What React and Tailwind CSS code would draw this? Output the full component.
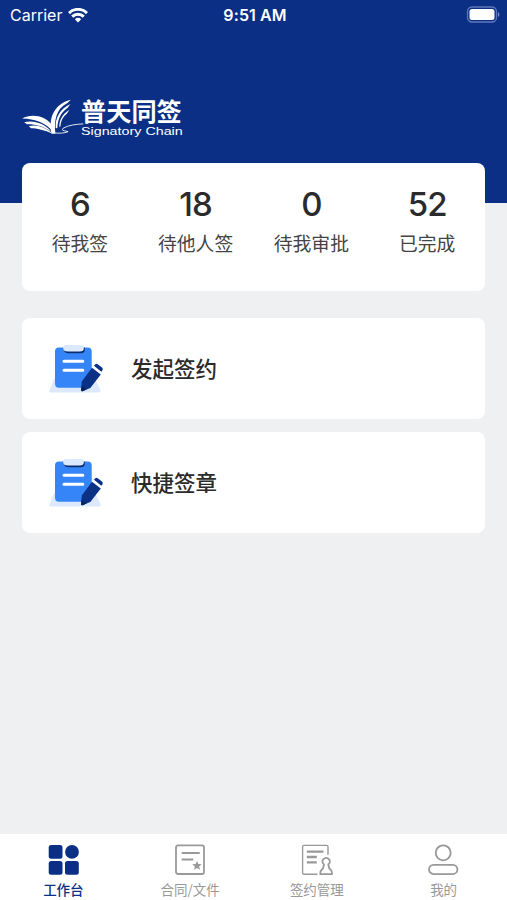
/**
 * App.jsx – signing workbench home screen
 */

const STATS = [
  { value: 6, label: '待我签' },
  { value: 18, label: '待他人签' },
  { value: 0, label: '待我审批' },
  { value: 52, label: '已完成' },
];

const ACTIONS = ['发起签约', '快捷签章'];

// ── Status bar ────────────────────────────────────────────────────────────
function StatusBar() {
  return (
    <div className="grid grid-cols-3 items-center h-[30px] pl-[10px] pr-[7px] text-white font-[Inter,sans-serif]">
      <div className="flex items-center gap-[6px]">
        <span className="text-[16px] leading-none">Carrier</span>
        <svg width="20" height="15" viewBox="0 0 20 15" fill="none" stroke="currentColor" strokeWidth="3">
          <path d="M1 5.1a12.7 12.7 0 0 1 18 0" />
          <path d="M4.2 8.6a8.3 8.3 0 0 1 11.6 0" />
          <path d="M10 14.6 6.8 11.3a4.7 4.7 0 0 1 6.4 0z" fill="currentColor" stroke="none" />
        </svg>
      </div>
      <span className="justify-self-center text-[16px] leading-none font-semibold tracking-[0.1px]">9:51 AM</span>
      <svg className="justify-self-end mb-[2px]" width="34" height="17" viewBox="0 0 34 17">
        <rect x="1.5" y="1" width="29" height="15" rx="4.5" fill="none" stroke="#6178ba" strokeWidth="1.3" />
        <rect x="3.5" y="3" width="25" height="11" rx="2.5" fill="#fff" />
        <path d="M32 6.2v4.6c1.8-.6 1.8-4 0-4.6z" fill="#7e92c9" />
      </svg>
    </div>
  );
}

// ── Brand ─────────────────────────────────────────────────────────────────
function Brand() {
  return (
    <div className="flex pl-[21px] pt-[68px] text-white">
      <svg className="shrink-0 -mr-[4px]" width="64" height="37" viewBox="20 25 190 110" fill="#fff">
        <path d="M23 86C50 71 93 77 110 104C116 114 116 122 115 127C98 100 60 87 23 86z" />
        <path d="M29 97C56 90 90 100 110 125C87 109 60 102 38 103z" />
        <path d="M43 109C66 103 90 111 114 131C90 121 66 115 50 115z" />
        <path d="M111 131C102 98 110 44 168 30L158 40C124 57 118 91 122 131z" />
        <path d="M123 114C121 84 136 57 167 43L158 55C139 68 129 87 128 115z" />
        <path d="M134 111C133 91 143 73 164 60L156 72C144 81 138 93 137 110z" />
        <path
          d="M117 128C132 131 148 130 160 125C148 122 138 122 145 115C160 106 182 103 205 102"
          fill="none" stroke="#fff" strokeWidth="2.6" />
      </svg>
      <div className="w-[102px]">
        <div className="text-[25.2px] leading-[24px] font-bold whitespace-nowrap font-['Noto_Sans_CJK_SC',sans-serif]">普天同签</div>
        <div className="mt-[4px] origin-left scale-x-[1.3] text-[11px] leading-[11px] whitespace-nowrap font-['Liberation_Sans',sans-serif]">Signatory Chain</div>
      </div>
    </div>
  );
}

// ── Cards ─────────────────────────────────────────────────────────────────
function StatsCard() {
  return (
    <div className="grid grid-cols-4 h-[128px] pt-[23px] rounded-lg bg-white text-center">
      {STATS.map(s => (
        <div key={s.label}>
          <div className="text-[33px] leading-[36px] font-medium text-[#2b2b2b] font-[Inter,sans-serif] tracking-[-0.9px]">{s.value}</div>
          <div className="mt-[8px] text-[18.8px] leading-[26px] text-[#444]">{s.label}</div>
        </div>
      ))}
    </div>
  );
}

function ContractIcon() {
  return (
    <svg width="54" height="50" viewBox="0 0 54 50">
      <path d="M5 35H46L51.5 46Q52 48.5 49 48.5H2Q-.5 48.5.5 46z" fill="#dce9fd" />
      <rect x="6" y="3.5" width="36.7" height="40.3" rx="4" fill="#3685f8" />
      <path d="M15 3.5h20.7v2.7q0 3-4 3H19.5q-4.5 0-4.5-4z" fill="#0b2d72" />
      <path d="M14.3 3q0-2 2.5-2h15.5q2.5 0 2.5 2v1.6q0 3-4 3H19q-4.7 0-4.7-3z" fill="#dce9fd" />
      <path d="M15 17.3h18.8M15 26.3h18.8" stroke="#fff" strokeWidth="3" strokeLinecap="round" />
      <path d="M43 23.8 51.8 30.5 41.3 44 33.5 47.2Q32 47.5 32.1 46L32.8 37.5z" fill="#0a3183" />
      <path d="M32.5 41.8 37.5 45.5 33.5 47.2Q32 47.5 32.1 46z" fill="#08235c" />
      <path d="M45 21.8 46.3 20.2Q47.3 19.3 48.7 20.2L53 23.5Q54.3 24.8 53.4 26.2L52.3 27.8z" fill="#0a3183" />
    </svg>
  );
}

function ActionCard({ title }) {
  return (
    <button className="flex items-center h-[101px] w-full pl-[27px] gap-[28px] rounded-lg bg-white">
      <ContractIcon />
      <span className="pb-[2px] text-[21.5px] leading-[32px] font-medium text-[#2b2b2b]">{title}</span>
    </button>
  );
}

// ── Tab bar ───────────────────────────────────────────────────────────────
function WorkbenchIcon() {
  return (
    <svg width="32" height="32" viewBox="0 0 32 32" fill="currentColor">
      <rect x="1.7" y="1" width="13.8" height="13.8" rx="2.5" />
      <circle cx="25" cy="7.9" r="6.9" />
      <rect x="1.7" y="17" width="13.8" height="13.8" rx="2.5" />
      <rect x="18" y="17" width="13.8" height="13.8" rx="2.5" />
    </svg>
  );
}

function FileIcon() {
  return (
    <svg width="32" height="32" viewBox="0 0 32 32" fill="none" stroke="currentColor" strokeWidth="1.8">
      <rect x="2" y="1.4" width="28" height="28.6" rx="2" />
      <path d="M7.7 9h18M7.7 15.5h11.5" />
      <path d="m23 16.8 1.3 3.2 3.4.2-2.6 2.2.9 3.4-3-1.9-3 1.9.9-3.4-2.6-2.2 3.4-.2z" fill="currentColor" stroke="none" />
    </svg>
  );
}

function StampIcon() {
  return (
    <svg width="32" height="32" viewBox="0 0 32 32" fill="none" stroke="currentColor" strokeWidth="1.4">
      <path d="M16.5 30.2H3Q1.6 30.2 1.6 29V2.6Q1.6 1.4 3 1.4H25.5Q27 1.4 27 2.8v8" />
      <path d="M5.8 7.6h16.7M5.8 13h10M5.8 18.4h10" strokeWidth="2.3" />
      <path
        d="M23 20.6a3.7 3.7 0 1 1 4.3 0c.3 3 1 4.4 2.8 5.7q1 .8.8 3.9H19.4q-.3-3 .8-3.9c1.8-1.3 2.5-2.7 2.8-5.7z"
        strokeWidth="1.8" />
    </svg>
  );
}

function MeIcon() {
  return (
    <svg width="32" height="32" viewBox="0 0 32 32" fill="none" stroke="currentColor" strokeWidth="1.8">
      <circle cx="15.2" cy="8.8" r="7.5" />
      <rect x="1" y="20.8" width="28.4" height="9.3" rx="4.65" />
    </svg>
  );
}

const TABS = [
  { label: '工作台', icon: WorkbenchIcon, active: true },
  { label: '合同/文件', icon: FileIcon },
  { label: '签约管理', icon: StampIcon },
  { label: '我的', icon: MeIcon },
];

function TabBar() {
  return (
    <nav className="grid grid-cols-4 h-[66px] pt-[10px] bg-white">
      {TABS.map(({ label, icon: Icon, active }) => (
        <button key={label} className={`flex flex-col items-center ${active ? 'text-[#0a2f85] font-medium' : 'text-[#999]'}`}>
          <Icon />
          <span className="mt-[3px] text-[13.5px] leading-[20px]">{label}</span>
        </button>
      ))}
    </nav>
  );
}

export default function App() {
  return (
    <div className="flex flex-col h-[900px] w-[507px] overflow-hidden bg-[#eff0f2] font-['Noto_Sans_CJK_SC',sans-serif]">
      <header className="h-[203px] shrink-0 bg-[#0a2f85]">
        <StatusBar />
        <Brand />
      </header>
      <main className="relative flex-1 -mt-[40px] px-[22px]">
        <StatsCard />
        <div className="mt-[27px] space-y-[13px]">
          {ACTIONS.map(title => <ActionCard key={title} title={title} />)}
        </div>
      </main>
      <TabBar />
    </div>
  );
}
